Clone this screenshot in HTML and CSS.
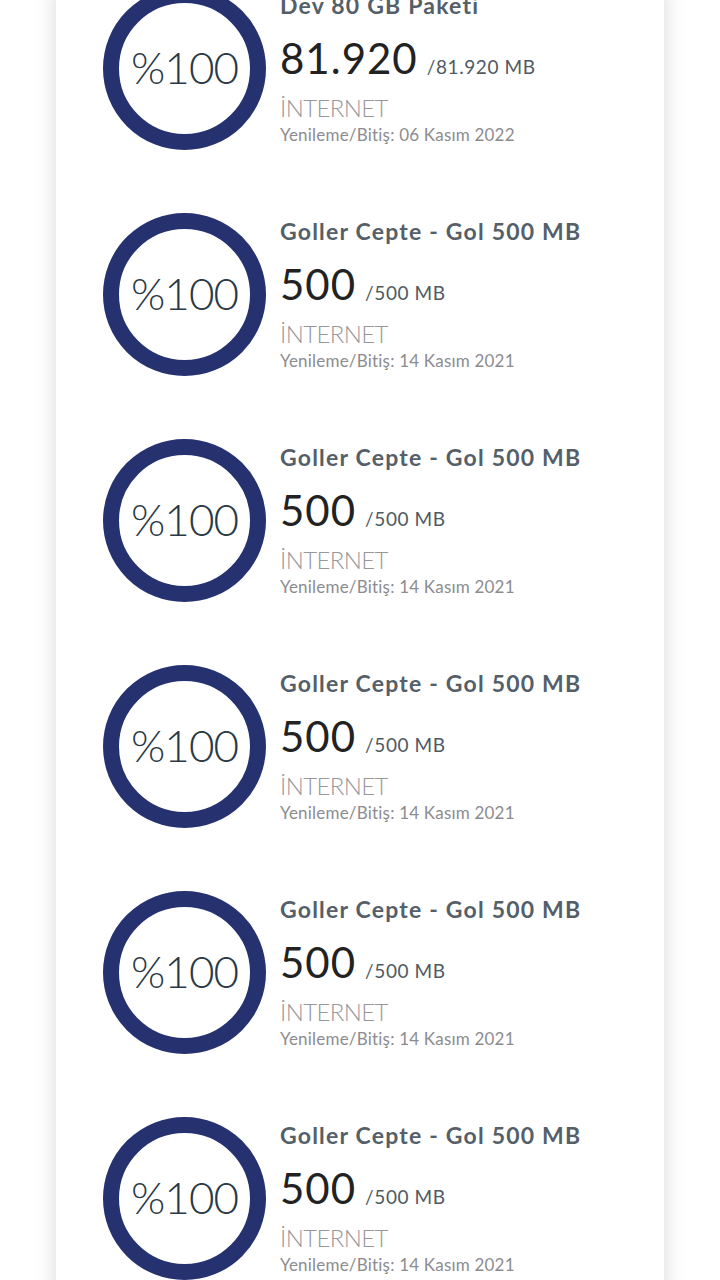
FILE: index.html
```html
<!DOCTYPE html>
<html lang="tr">
<head>
<meta charset="utf-8">
<link rel="stylesheet" href="styles.css">
</head>
<body>
<div class="card">
  <div class="row">
    <div class="ring"><svg viewBox="0 0 163 163" width="163" height="163"><circle cx="81.5" cy="81.5" r="73.5" fill="none" stroke="#263170" stroke-width="16"/></svg><span class="pct">%100</span></div>
    <div class="info">
      <div class="title">Dev 80 GB Paketi</div>
      <div class="amount"><span class="big">81.920</span><span class="total">/81.920 MB</span></div>
      <div class="type">İNTERNET</div>
      <div class="date">Yenileme/Bitiş: 06 Kasım 2022</div>
    </div>
  </div>
  <div class="row">
    <div class="ring"><svg viewBox="0 0 163 163" width="163" height="163"><circle cx="81.5" cy="81.5" r="73.5" fill="none" stroke="#263170" stroke-width="16"/></svg><span class="pct">%100</span></div>
    <div class="info">
      <div class="title">Goller Cepte - Gol 500 MB</div>
      <div class="amount"><span class="big">500</span><span class="total">/500 MB</span></div>
      <div class="type">İNTERNET</div>
      <div class="date">Yenileme/Bitiş: 14 Kasım 2021</div>
    </div>
  </div>
  <div class="row">
    <div class="ring"><svg viewBox="0 0 163 163" width="163" height="163"><circle cx="81.5" cy="81.5" r="73.5" fill="none" stroke="#263170" stroke-width="16"/></svg><span class="pct">%100</span></div>
    <div class="info">
      <div class="title">Goller Cepte - Gol 500 MB</div>
      <div class="amount"><span class="big">500</span><span class="total">/500 MB</span></div>
      <div class="type">İNTERNET</div>
      <div class="date">Yenileme/Bitiş: 14 Kasım 2021</div>
    </div>
  </div>
  <div class="row">
    <div class="ring"><svg viewBox="0 0 163 163" width="163" height="163"><circle cx="81.5" cy="81.5" r="73.5" fill="none" stroke="#263170" stroke-width="16"/></svg><span class="pct">%100</span></div>
    <div class="info">
      <div class="title">Goller Cepte - Gol 500 MB</div>
      <div class="amount"><span class="big">500</span><span class="total">/500 MB</span></div>
      <div class="type">İNTERNET</div>
      <div class="date">Yenileme/Bitiş: 14 Kasım 2021</div>
    </div>
  </div>
  <div class="row">
    <div class="ring"><svg viewBox="0 0 163 163" width="163" height="163"><circle cx="81.5" cy="81.5" r="73.5" fill="none" stroke="#263170" stroke-width="16"/></svg><span class="pct">%100</span></div>
    <div class="info">
      <div class="title">Goller Cepte - Gol 500 MB</div>
      <div class="amount"><span class="big">500</span><span class="total">/500 MB</span></div>
      <div class="type">İNTERNET</div>
      <div class="date">Yenileme/Bitiş: 14 Kasım 2021</div>
    </div>
  </div>
  <div class="row">
    <div class="ring"><svg viewBox="0 0 163 163" width="163" height="163"><circle cx="81.5" cy="81.5" r="73.5" fill="none" stroke="#263170" stroke-width="16"/></svg><span class="pct">%100</span></div>
    <div class="info">
      <div class="title">Goller Cepte - Gol 500 MB</div>
      <div class="amount"><span class="big">500</span><span class="total">/500 MB</span></div>
      <div class="type">İNTERNET</div>
      <div class="date">Yenileme/Bitiş: 14 Kasım 2021</div>
    </div>
  </div>
</div>
</body>
</html>
```
FILE: styles.css
```css
html, body {
  margin: 0;
  padding: 0;
  background: #ffffff;
  overflow: hidden;
  height: 1280px;
}
body {
  font-family: Lato, "Noto Sans", sans-serif;
}
.card {
  width: 608px;
  margin: -13px 0 0 56px;
  background: #ffffff;
  box-shadow: 0 0 20px rgba(0, 0, 0, 0.16);
  padding: 0 0 0 47px;
  box-sizing: border-box;
  display: flex;
  flex-direction: column;
  gap: 63px;
  min-height: 1400px;
}
.row {
  display: flex;
  align-items: flex-start;
  gap: 14px;
}
.ring {
  position: relative;
  width: 163px;
  height: 163px;
  flex: none;
}
.ring svg {
  display: block;
}
.pct {
  position: absolute;
  inset: 0;
  display: flex;
  align-items: center;
  justify-content: center;
  font-size: 44px;
  font-weight: 300;
  color: #2a3945;
  letter-spacing: -1px;
  padding-bottom: 4px;
  box-sizing: border-box;
}
.info {
  display: flex;
  flex-direction: column;
  padding-top: 4px;
}
.title {
  font-size: 23px;
  font-weight: 700;
  color: #555f69;
  line-height: 28px;
  letter-spacing: 1.2px;
}
.amount {
  display: flex;
  align-items: baseline;
  margin-top: 15px;
  line-height: 48px;
}
.big {
  font-size: 42px;
  color: #222222;
  font-weight: 400;
  letter-spacing: 1px;
}
.total {
  font-size: 19px;
  color: #4f5a63;
  margin-left: 9px;
  letter-spacing: 0.6px;
}
.type {
  font-size: 24px;
  font-weight: 300;
  color: #98989c;
  line-height: 26px;
  margin-top: 4px;
  letter-spacing: -0.6px;
}
.date {
  font-size: 17px;
  color: #8c8c90;
  line-height: 22px;
  margin-top: 3px;
  letter-spacing: 0.2px;
}
```
